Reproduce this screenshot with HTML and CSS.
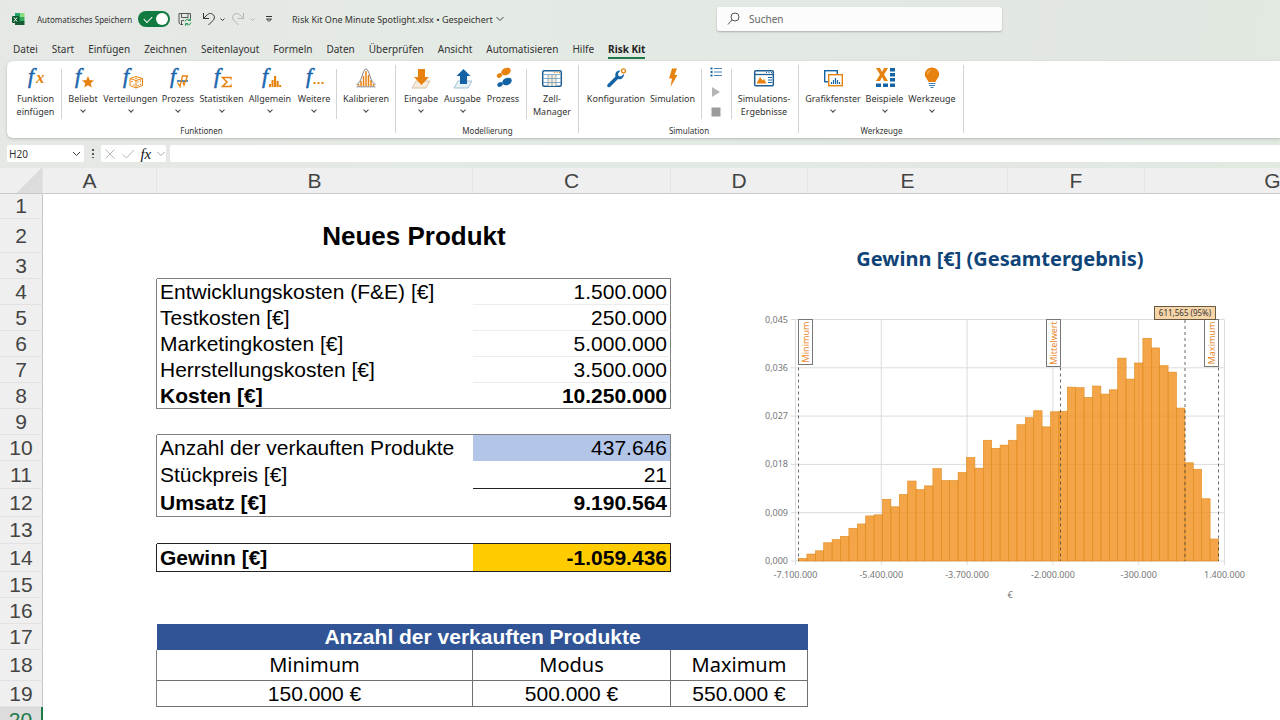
FILE: index.html
```html
<!DOCTYPE html>
<html lang="de">
<head>
    <meta charset="UTF-8">
    <meta name="viewport" content="width=device-width, initial-scale=1.0">
    <title>Risk Kit One Minute Spotlight.xlsx</title>
    <link rel="stylesheet" href="styles.css">
</head>
<body>
    <!-- Title bar -->
    <header class="titlebar">
        <div class="quick-access">
            <svg class="app-icon" width="14" height="14" viewBox="0 0 14 14">
                <path d="M3 1h5v4H3z" fill="#21a366"/><path d="M8 1h4.500v4H8z" fill="#8fdc7c"/>
                <path d="M3 5h5v4H3z" fill="#107c41"/><path d="M8 5h4.500v4H8z" fill="#33a85c"/>
                <path d="M3 9h9.500v4H3z" fill="#185c37"/>
                <rect x="0" y="4" width="7" height="7" rx="1" fill="#0b5a2e"/>
                <path d="M2 5.500l3 4M5 5.500l-3 4" stroke="#fff" stroke-width="1"/>
            </svg>
            <label class="autosave" for="autosave">Automatisches Speichern</label>
            <input class="switch" type="checkbox" id="autosave" checked>
            <button class="icon-button" aria-label="Speichern">
                <svg width="14" height="14" viewBox="0 0 14 14" fill="none" stroke="#555">
                    <path d="M5 12.500H2.500L1 11V1.500h11.500V6M3.500 1.500V5.500h6.500V1.500M3.500 12.500V8.500H6"/>
                    <path d="M7 9.500a3 3 0 0 1 5-1.500M12.500 6v2.500H10M13 10.500a3 3 0 0 1-5 1.500M7.500 13.800V11.500H10" stroke="#2f9a57"/>
                </svg>
            </button>
            <button class="icon-button undo" aria-label="Rückgängig">
                <svg width="24" height="14" viewBox="0 0 24 14" fill="none" stroke="#333">
                    <path d="M1.500 1v5.500H7M1.500 6.500L5 3C7 1 10 1 11.500 3s1 4-.5 5.500L6.500 13"/>
                    <path d="M18.500 6.500l2 2 2-2"/>
                </svg>
            </button>
            <button class="icon-button redo" aria-label="Wiederholen">
                <svg width="24" height="14" viewBox="0 0 24 14" fill="none" stroke="#b4b8b4">
                    <path d="M11.500 1v5.500H6M11.500 6.500L8 3C6 1 3 1 1.500 3s-1 4 .5 5.500L6.500 13"/>
                    <path d="M18.500 6.500l2 2 2-2"/>
                </svg>
            </button>
            <button class="icon-button" aria-label="Symbolleiste anpassen">
                <svg width="8" height="8" viewBox="0 0 8 8" fill="none" stroke="#333"><path d="M1 1.500h6M1.500 4h5L4 6.500z"/></svg>
            </button>
            <button class="file-name">Risk Kit One Minute Spotlight.xlsx • Gespeichert
                <svg width="8" height="6" viewBox="0 0 8 6" fill="none" stroke="#444"><path d="M.5 1L4 4.500 7.500 1"/></svg>
            </button>
        </div>
        <div class="search">
            <svg width="14" height="14" viewBox="0 0 14 14" fill="none" stroke="#555"><circle cx="8" cy="5" r="4"/><path d="M5 8L1 12.500"/></svg>
            <input type="text" placeholder="Suchen" aria-label="Suchen">
        </div>
    </header>

    <!-- Tabs -->
    <nav class="tabs">
        <a href="#">Datei</a>
        <a href="#">Start</a>
        <a href="#">Einfügen</a>
        <a href="#">Zeichnen</a>
        <a href="#">Seitenlayout</a>
        <a href="#">Formeln</a>
        <a href="#">Daten</a>
        <a href="#">Überprüfen</a>
        <a href="#">Ansicht</a>
        <a href="#">Automatisieren</a>
        <a href="#">Hilfe</a>
        <a href="#" class="active">Risk Kit</a>
    </nav>

    <!-- Ribbon -->
    <div class="ribbon">
        <section class="group functions">
            <div class="tools">
                <button class="tool">
                    <svg width="24" height="22" viewBox="0 0 24 22"><text class="f" x="4" y="16">f</text><text class="x" x="12" y="16">x</text></svg>
                    <span>Funktion<br>einfügen</span>
                </button>
                <i class="sep"></i>
                <button class="tool">
                    <svg width="24" height="22" viewBox="0 0 24 22"><text class="f" x="4" y="16">f</text><path d="M17 9l1.700 4 4.300.4-3.300 2.800 1 4.300L17 18.200l-3.700 2.300 1-4.300L11 13.400l4.300-.4z" fill="#e8820e"/></svg>
                    <span>Beliebt</span><i class="down"></i>
                </button>
                <button class="tool">
                    <svg width="24" height="22" viewBox="0 0 24 22"><text class="f" x="4" y="16">f</text>
                        <path d="M17 9.500l6.500 2v7L17 21l-6-2.500v-7zM11 11.500l6 2 6.500-2M17 13.500V21" fill="#fff" stroke="#e8820e"/>
                        <g fill="#e8820e"><circle cx="13" cy="14.500" r=".8"/><circle cx="15" cy="18" r=".8"/><circle cx="19" cy="15" r=".7"/><circle cx="21.500" cy="14" r=".7"/><circle cx="19" cy="18.500" r=".7"/><circle cx="21.500" cy="17.500" r=".7"/><circle cx="17" cy="11.500" r=".8"/></g></svg>
                    <span>Verteilungen</span><i class="down"></i>
                </button>
                <button class="tool">
                    <svg width="24" height="22" viewBox="0 0 24 22"><text class="f" x="4" y="16">f</text><path d="M11 14h11" stroke="#1c66ad" stroke-width="1.500"/><path d="M11.500 15.500l2.500 4 2.500-10.500h5l-3.500 9-1-3" fill="none" stroke="#e8820e" stroke-width="1.300"/></svg>
                    <span>Prozess</span><i class="down"></i>
                </button>
                <button class="tool">
                    <svg width="24" height="22" viewBox="0 0 24 22"><text class="f" x="4" y="16">f</text><path d="M21 12.500v-2h-8.500l4.500 4.500-4.500 4.500H21v-2" fill="none" stroke="#e8820e" stroke-width="1.500"/></svg>
                    <span>Statistiken</span><i class="down"></i>
                </button>
                <button class="tool">
                    <svg width="24" height="22" viewBox="0 0 24 22"><text class="f" x="4" y="16">f</text><path d="M11 17h2v3h-2zM13.500 13h2v7h-2zM16 9h2.200v11H16zM18.700 14h2v6h-2zM21.200 18h2v2h-2z" fill="#e8820e"/></svg>
                    <span>Allgemein</span><i class="down"></i>
                </button>
                <button class="tool">
                    <svg width="24" height="22" viewBox="0 0 24 22"><text class="f" x="4" y="16">f</text><path d="M11.500 15h2v2h-2zM15.500 15h2v2h-2zM19.500 15h2v2h-2z" fill="#e8820e"/></svg>
                    <span>Weitere</span><i class="down"></i>
                </button>
                <i class="sep"></i>
                <button class="tool">
                    <svg width="24" height="22" viewBox="0 0 24 22" fill="none"><path d="M4.500 19v-2M7 19v-5M9.500 19V9M12 19V4M14.500 19V8M17 19v-6M19.500 19v-2" stroke="#e8820e" stroke-width="1.500"/><path d="M2.500 17.500C8 16 8.500 2 12 2s4 14 9.500 15.500M2.500 19.800h19" stroke="#777" stroke-width=".9"/></svg>
                    <span>Kalibrieren</span><i class="down"></i>
                </button>
            </div>
            <h2>Funktionen</h2>
        </section>

        <section class="group modelling">
            <div class="tools">
                <button class="tool">
                    <svg width="24" height="22" viewBox="0 0 24 22"><path d="M7 14h14l-4 7H3z" fill="#f8eddd" stroke="#c9b79c" stroke-width=".8"/><path d="M9 2h7v8h4l-7.500 8L5 10h4z" fill="#e8820e"/></svg>
                    <span>Eingabe</span><i class="down"></i>
                </button>
                <button class="tool">
                    <svg width="24" height="22" viewBox="0 0 24 22"><path d="M7 14h14l-4 7H3z" fill="#e6f1f6" stroke="#8fb6c9" stroke-width=".8"/><path d="M12.500 2l7 7H16v8H9V9H5.500z" fill="#1464a5"/></svg>
                    <span>Ausgabe</span><i class="down"></i>
                </button>
                <button class="tool">
                    <svg width="24" height="22" viewBox="0 0 24 22"><g fill="#e8820e"><ellipse cx="15" cy="4.500" rx="5" ry="3.500" transform="rotate(-25 15 4.500)"/><ellipse cx="8.500" cy="8.500" rx="2.800" ry="2.200" transform="rotate(-25 8.500 8.500)"/></g><g fill="#1464a5"><ellipse cx="16" cy="14.500" rx="5" ry="3.500" transform="rotate(-25 16 14.500)"/><ellipse cx="9" cy="17.500" rx="2.800" ry="2.200" transform="rotate(-25 9 17.500)"/></g></svg>
                    <span>Prozess</span>
                </button>
                <i class="sep"></i>
                <button class="tool">
                    <svg width="24" height="22" viewBox="0 0 24 22" fill="none"><rect x="2.700" y="3.700" width="18.600" height="15.600" rx="1.500" fill="#fff" stroke="#1f5f93" stroke-width="1.500"/><path d="M8 8h8v11H8z" fill="#f8ecd5"/><path d="M3 7.500h18M3 11.500h18M3 15.500h18M8 8v11M12 8v11M16 8v11" stroke="#6d9bbd" stroke-width=".8"/><path d="M14 5.500h1M16.500 5.500h1M19 5.500h1" stroke="#e8820e"/></svg>
                    <span>Zell-<br>Manager</span>
                </button>
            </div>
            <h2>Modellierung</h2>
        </section>

        <section class="group simulation">
            <div class="tools">
                <button class="tool">
                    <svg width="24" height="22" viewBox="0 0 24 22"><path d="M3.500 17.500l8-8C10.500 6 13 3 16.500 3.500L14 6.500l.5 2.500 2.500.5 3-2.500c0 4-3 6-6 5l-8 8c-2 1-3.500-.5-2.500-2.500z" fill="#1464a5"/><circle cx="19.500" cy="3.800" r="2" fill="none" stroke="#e8820e" stroke-width="1.300"/></svg>
                    <span>Konfiguration</span>
                </button>
                <button class="tool">
                    <svg width="24" height="22" viewBox="0 0 24 22"><path d="M11 1.500h5L13.500 8H16.500L9.500 20l1.500-8.500H8z" fill="#e8820e"/></svg>
                    <span>Simulation</span>
                </button>
                <i class="sep"></i>
                <div class="mini-tools">
                    <button aria-label="Liste"><svg width="12" height="10" viewBox="0 0 12 10"><path d="M4 1.500h8M4 5h8M4 8.500h8" stroke="#4a86b7"/><path d="M.5 .5h2v2h-2zM.5 4h2v2h-2zM.5 7.500h2v2h-2z" fill="#1464a5"/></svg></button>
                    <button aria-label="Start"><svg width="12" height="10" viewBox="0 0 12 10"><path d="M2 0l8 5-8 5z" fill="#b5b5b5"/></svg></button>
                    <button aria-label="Stopp"><svg width="12" height="10" viewBox="0 0 12 10"><path d="M1.500 .5h9v9h-9z" fill="#9b9b9b"/></svg></button>
                </div>
                <i class="sep"></i>
                <button class="tool">
                    <svg width="24" height="22" viewBox="0 0 24 22" fill="none"><rect x="2.700" y="3.700" width="18.600" height="15" rx="1" stroke="#1f5f93" stroke-width="1.500"/><path d="M3 7.500h18" stroke="#1f5f93" stroke-width="1.300"/><path d="M14 5.500h1M16.500 5.500h1M19 5.500h1" stroke="#1f5f93"/><path d="M4.500 16.500L8 10l2.500 3.500L12 12l2.500 4.500z" fill="#e8820e"/><path d="M16 10.500h4M16 13h4M16 15.500h4" stroke="#1464a5"/></svg>
                    <span>Simulations-<br>Ergebnisse</span>
                </button>
            </div>
            <h2>Simulation</h2>
        </section>

        <section class="group utilities">
            <div class="tools">
                <button class="tool">
                    <svg width="24" height="22" viewBox="0 0 24 22"><rect x="3.700" y="3.700" width="12.600" height="11" fill="#fff" stroke="#1464a5" stroke-width="1.400"/><rect x="7.700" y="7.700" width="13.600" height="11" fill="#fff" stroke="#e8820e" stroke-width="1.400"/><path d="M10.500 17v-2M12.500 17v-4M14.500 17v-6M16.500 17v-4M18.500 17v-2" stroke="#1464a5" stroke-width="1.200"/></svg>
                    <span>Grafikfenster</span><i class="down"></i>
                </button>
                <button class="tool">
                    <svg width="24" height="22" viewBox="0 0 24 22"><path d="M3 1h4l2 4 2-4h4l-4 6.500 4 6.500h-4l-2-4-2 4H3l4-6.500z" fill="#e8820e"/><path d="M17 1h5v3.500h-5zM17 6h5v3.500h-5zM17 11h5v3.500h-5zM17 16.500h5V20h-5zM10 16.500h5V20h-5zM3 16.500h5V20H3z" fill="#1464a5"/></svg>
                    <span>Beispiele</span><i class="down"></i>
                </button>
                <button class="tool">
                    <svg width="24" height="22" viewBox="0 0 24 22"><path d="M12 .5a7 7 0 0 1 7.200 7c0 3-2.700 4.500-3.700 7.500h-7c-1-3-3.700-4.500-3.700-7.500A7 7 0 0 1 12 .5z" fill="#e8820e"/><path d="M7.500 7A4.500 4.500 0 0 1 10.500 3.200" fill="none" stroke="#f9c37e"/><path d="M8.500 16.500h7M9 18.500h6M10.500 20.500h3" stroke="#3c7fb5" stroke-width="1.200"/></svg>
                    <span>Werkzeuge</span><i class="down"></i>
                </button>
            </div>
            <h2>Werkzeuge</h2>
        </section>
    </div>

    <!-- Formula bar -->
    <div class="formula-bar">
        <div class="name-box">
            <input type="text" value="H20" aria-label="Namenfeld">
            <svg width="9" height="6" viewBox="0 0 9 6" fill="none" stroke="#444"><path d="M1 1l3.500 3.500L8 1"/></svg>
        </div>
        <span class="grip"></span>
        <div class="formula-buttons">
            <button aria-label="Abbrechen"><svg width="12" height="12" viewBox="0 0 12 12" fill="none" stroke="#b8b8b8"><path d="M1.500 1.500l9 9M10.500 1.500l-9 9"/></svg></button>
            <button aria-label="Eingeben"><svg width="13" height="12" viewBox="0 0 13 12" fill="none" stroke="#b8b8b8"><path d="M1 6.500l3.500 3.500L12 2"/></svg></button>
            <button class="fx">fx</button>
            <svg width="8" height="6" viewBox="0 0 8 6" fill="none" stroke="#aaa"><path d="M.5 1L4 4.500 7.500 1"/></svg>
        </div>
        <input class="formula" type="text" aria-label="Bearbeitungsleiste">
    </div>

    <!-- Worksheet -->
    <main class="sheet">
        <table>
            <colgroup>
                <col class="col-head"><col class="col-a"><col class="col-b"><col class="col-c">
                <col class="col-d"><col class="col-e"><col class="col-f"><col class="col-g">
            </colgroup>
            <thead>
                <tr><th class="corner"></th><th class="a">A</th><th>B</th><th>C</th><th>D</th><th>E</th><th>F</th><th>G</th></tr>
            </thead>
            <tbody>
                <tr class="first"><th>1</th><td></td><td></td><td></td><td></td></tr>
                <tr class="tall"><th>2</th><td></td><td class="title" colspan="2">Neues Produkt</td><td></td></tr>
                <tr><th>3</th><td></td><td class="line"></td><td class="line"></td><td></td></tr>
                <tr><th>4</th><td class="edge"></td><td>Entwicklungskosten (F&amp;E) [€]</td><td class="num faint">1.500.000</td><td></td></tr>
                <tr><th>5</th><td class="edge"></td><td>Testkosten [€]</td><td class="num faint">250.000</td><td></td></tr>
                <tr><th>6</th><td class="edge"></td><td>Marketingkosten [€]</td><td class="num faint">5.000.000</td><td></td></tr>
                <tr><th>7</th><td class="edge"></td><td>Herrstellungskosten [€]</td><td class="num faint">3.500.000</td><td></td></tr>
                <tr class="sum"><th>8</th><td class="edge"></td><td class="line">Kosten [€]</td><td class="num line">10.250.000</td><td></td></tr>
                <tr><th>9</th><td></td><td class="line"></td><td class="line"></td><td></td></tr>
                <tr><th>10</th><td class="edge"></td><td>Anzahl der verkauften Produkte</td><td class="num input">437.646</td><td></td></tr>
                <tr class="mid"><th>11</th><td class="edge"></td><td>Stückpreis [€]</td><td class="num strong">21</td><td></td></tr>
                <tr class="mid sum"><th>12</th><td class="edge"></td><td class="line">Umsatz [€]</td><td class="num line">9.190.564</td><td></td></tr>
                <tr class="gap"><th>13</th><td></td><td class="strong"></td><td class="strong"></td><td></td></tr>
                <tr class="mid sum"><th>14</th><td class="edge strong-edge"></td><td class="strong">Gewinn [€]</td><td class="num result strong">-1.059.436</td><td></td></tr>
                <tr><th>15</th><td></td><td></td><td></td><td></td></tr>
                <tr><th>16</th><td></td><td></td><td></td><td></td></tr>
                <tr><th>17</th><td></td><td class="banner" colspan="3">Anzahl der verkauften Produkte</td></tr>
                <tr class="param-names"><th>18</th><td class="edge"></td><td class="box">Minimum</td><td class="box">Modus</td><td class="box">Maximum</td></tr>
                <tr><th>19</th><td class="edge"></td><td class="box">150.000 €</td><td class="box">500.000 €</td><td class="box">550.000 €</td></tr>
                <tr class="current"><th>20</th><td></td><td></td><td></td><td></td></tr>
            </tbody>
        </table>

        <!-- Chart object floating over the cells -->
        <figure class="chart">
            <figcaption>Gewinn [€] (Gesamtergebnis)</figcaption>
            <svg id="histogram" width="500" height="310" viewBox="0 0 500 310"></svg>
        </figure>
    </main>

    <script src="chart.js"></script>
</body>
</html>
```
FILE: styles.css
```css
* {
    margin: 0;
    padding: 0;
    box-sizing: border-box;
}

body {
    display: flex;
    flex-direction: column;
    height: 100vh;
    overflow: hidden;
    background: linear-gradient(100deg, #e6e8e6, #e3eae3 40%, #e2e7e3 75%, #e1eadf);
    font-family: "Noto Sans", "Open Sans", sans-serif;
    font-size: 9px;
    color: #333;
}

button,
input {
    border: none;
    background: none;
    font: inherit;
    color: inherit;
    outline: none;
}

svg {
    display: block;
    flex: none;
    overflow: visible;
}

/* Title bar */
.titlebar {
    display: flex;
    height: 38px;
    padding-left: 12px;
    align-items: center;
}

.quick-access {
    display: flex;
    align-items: center;
    flex: 0 0 705px;
    font-size: 9px;
}

.autosave {
    width: 101px;
    margin-left: 11px;
    font-size: 8px;
    white-space: nowrap;
}

.switch {
    appearance: none;
    position: relative;
    width: 32px;
    height: 16px;
    margin-right: 8px;
    border-radius: 8px;
    background: #117a41;
}

.switch::after {
    content: "";
    position: absolute;
    right: 2px;
    top: 2px;
    width: 12px;
    height: 12px;
    border-radius: 50%;
    background: #fff;
}

.switch::before {
    content: "";
    position: absolute;
    left: 6px;
    top: 5px;
    width: 7px;
    height: 4px;
    border-left: 1px solid #fff;
    border-bottom: 1px solid #fff;
    transform: rotate(-45deg);
}

.undo {
    margin-left: 10px;
}

.redo {
    margin: 0 9px 0 6px;
}

.file-name {
    display: flex;
    align-items: center;
    gap: 3px;
    margin-left: 19px;
    white-space: nowrap;
}

.search {
    display: flex;
    align-items: center;
    gap: 8px;
    flex: 0 1 285px;
    height: 24px;
    padding: 0 10px;
    border-radius: 2px;
    background: #fbfcfb;
    box-shadow: 0 1px 2px #a9aeaa;
}

.search input {
    flex: 1;
    min-width: 0;
    font-size: 10px;
}

.search input::placeholder {
    color: #666;
}

/* Tabs */
.tabs {
    display: flex;
    gap: 14px;
    height: 23px;
    padding: 4px 13px 0;
    font-size: 10px;
    line-height: 15px;
}

.tabs a {
    height: 17px;
    color: #333;
    text-decoration: none;
    white-space: nowrap;
}

.tabs .active {
    border-bottom: 2px solid #1d7a47;
    font-weight: bold;
    color: #222;
}

/* Ribbon */
.ribbon {
    display: flex;
    height: 77px;
    margin-left: 7px;
    border-radius: 6px 0 0 6px;
    background: #fff;
    box-shadow: 0 1px 3px #b4bab5;
}

.group {
    position: relative;
    display: flex;
    flex-direction: column;
    justify-content: space-between;
}

.group::after {
    content: "";
    position: absolute;
    top: 4px;
    right: 0;
    bottom: 5px;
    border-right: 1px solid #d4d4d4;
}

.group h2 {
    font-size: 8px;
    font-weight: normal;
    line-height: 15px;
    text-align: center;
}

.tools {
    display: grid;
    padding-top: 6px;
}

.functions .tools {
    grid-template-columns: 51px 1px 42px 53px 42px 45px 52px 36px 5px 58px;
    padding-left: 3px;
    padding-right: 1px;
}

.modelling .tools {
    grid-template-columns: 42px 41px 40px 4px 50px;
    padding-left: 4px;
    padding-right: 2px;
}

.simulation .tools {
    grid-template-columns: 64px 49px 5px 28px 2px 64px;
    padding-left: 5px;
    padding-right: 3px;
}

.utilities .tools {
    grid-template-columns: 60px 43px 52px;
    padding-left: 4px;
    padding-right: 6px;
}

.tool {
    display: flex;
    flex-direction: column;
    align-items: center;
    line-height: 13px;
    white-space: nowrap;
}

.tool span {
    margin-top: 3px;
}

.tool .f {
    font: italic 22px "Liberation Serif", serif;
    fill: #1c66ad;
    stroke: #1c66ad;
    stroke-width: 0.5;
}

.tool .x {
    font: italic bold 17px "Liberation Serif", serif;
    fill: #e8820e;
}

.down {
    width: 4px;
    height: 4px;
    margin-top: 3px;
    border-right: 1px solid #444;
    border-bottom: 1px solid #444;
    transform: rotate(45deg);
}

.sep {
    height: 50px;
    margin-top: 2px;
    border-right: 1px solid #d4d4d4;
}

.mini-tools {
    display: flex;
    flex-direction: column;
    align-items: center;
    gap: 10px;
}

/* Formula bar */
.formula-bar {
    display: flex;
    height: 17px;
    margin: 7px 0 6px 7px;
}

.name-box,
.formula-buttons {
    display: flex;
    align-items: center;
    border-radius: 2px;
    background: #fff;
}

.name-box {
    width: 77px;
    padding: 0 3px 0 2px;
}

.name-box input {
    flex: 1;
    min-width: 0;
    font-size: 10px;
}

.grip {
    width: 2px;
    height: 9px;
    margin: 4px 7px 0 8px;
    background: repeating-linear-gradient(#555 0 2px, transparent 2px 4px);
}

.formula-buttons {
    justify-content: space-between;
    width: 65px;
    padding: 0 1px 0 3px;
}

.fx {
    font: italic 15px/16px "Liberation Serif", serif;
    color: #111;
}

.formula {
    flex: 1;
    margin-left: 4px;
    border-radius: 2px 0 0 2px;
    background: #fff;
}

/* Worksheet */
.sheet {
    position: relative;
    flex: 1;
    overflow: hidden;
    background: #fff;
    font-family: "Liberation Sans", Arial, sans-serif;
    font-size: 21px;
    line-height: 24px;
    color: #000;
}

table {
    width: 1401px;
    table-layout: fixed;
    border-collapse: separate;
    border-spacing: 0;
}

.col-head { width: 43px; }
.col-a { width: 114px; }
.col-b { width: 316px; }
.col-c { width: 198px; }
.col-d { width: 137px; }
.col-e { width: 200px; }
.col-f { width: 137px; }
.col-g { width: 256px; }

tr {
    height: 26px;
}

.first { height: 25px; }
.tall { height: 34px; }
.gap { height: 27px; }
.mid { height: 28px; }
.param-names { height: 31px; }

th {
    background: #efefef;
    color: #444;
    font-weight: normal;
}

thead th {
    border-right: 1px solid #e4e4e4;
    border-bottom: 1px solid #c9c9c9;
}

thead .a {
    padding-right: 20px;
}

.corner {
    background: linear-gradient(135deg, #efefef 62%, #dcdcdc 62%);
}

tbody th {
    border-right: 1px solid #c6c6c6;
    border-bottom: 1px solid #e2e2e2;
}

td {
    padding: 0 3px;
    white-space: nowrap;
}

.title {
    font-size: 26px;
    font-weight: bold;
    text-align: center;
}

.num {
    border-right: 1px solid #808080;
    text-align: right;
}

.sum td {
    font-weight: bold;
}

.edge { border-right: 1px solid #808080; }
.line { border-bottom: 1px solid #808080; }
.faint { border-bottom: 1px solid #ececec; }
.strong { border-bottom: 1px solid #222; }
.strong-edge { border-right-color: #222; }

.input {
    background: #b4c6e7;
}

.result {
    border-right-color: #222;
    background: #ffcc00;
}

.banner {
    background: #305496;
    color: #fff;
    font-weight: bold;
    text-align: center;
}

.box {
    border-right: 1px solid #707070;
    border-bottom: 1px solid #707070;
    text-align: center;
}

.param-names .box {
    font-family: "Noto Sans", sans-serif;
    font-size: 20px;
}

.current th {
    border-right: 2px solid #1d7a47;
    background: #dcdcdc;
    color: #1d7a47;
}

/* Chart */
.chart {
    position: absolute;
    top: 78px;
    left: 750px;
    width: 500px;
    font-family: "Noto Sans", "Open Sans", sans-serif;
}

.chart figcaption {
    height: 54px;
    line-height: 26px;
    font-size: 20px;
    font-weight: bold;
    text-align: center;
    color: #0f4478;
}

.chart text {
    font-size: 9px;
    fill: #777;
}

.chart .tick {
    stroke: #dcdcdc;
}

.chart .bar {
    fill: #f08c14;
    fill-opacity: 0.78;
    stroke: #e08a1e;
    stroke-width: 0.6;
}

.chart .marker {
    stroke: #444;
    stroke-opacity: 0.8;
    stroke-dasharray: 3 3;
}

.chart .flag {
    fill: #fff;
    stroke: #777;
}

.chart .flag-text {
    fill: #e8872a;
}

.chart .value-flag {
    fill: #f6d5a8;
    stroke: #6b5a42;
}

.chart .value-text {
    font-size: 8px;
    fill: #333;
}
```
FILE: chart.js
```javascript
const svg = document.getElementById('histogram');

// Plot area inside the svg
const plot = { left: 45.5, top: 19.5, width: 429, height: 241.5 };
const bottom = plot.top + plot.height;

const density = [
    5, 13, 19, 34, 40, 46, 61, 69, 84, 86,
    115, 101, 124, 149, 133, 140, 172, 150, 150, 165,
    193, 173, 225, 210, 216, 225, 254, 267, 280, 250,
    278, 279, 324, 323, 305, 326, 311, 319, 378, 339,
    369, 415, 397, 364, 352, 285, 183, 171, 116, 41
];

const yLabels = ['0,000', '0,009', '0,018', '0,027', '0,036', '0,045'];
const xLabels = ['-7.100.000', '-5.400.000', '-3.700.000', '-2.000.000', '-300.000', '1.400.000'];

const flags = [
    { text: 'Minimum', line: 48.5, box: 48.5, height: 45 },
    { text: 'Mittelwert', line: 310.5, box: 296.5, height: 47 },
    { text: 'Maximum', line: 468.5, box: 454.5, height: 47 }
];

let out = '';

// Grid and axis labels
yLabels.forEach((label, i) => {
    const y = bottom - plot.height * i / 5;
    out += `<line class="tick" x1="41" x2="${plot.left + plot.width}" y1="${y}" y2="${y}"/>`;
    out += `<text x="38" y="${y + 3}" text-anchor="end">${label}</text>`;
});
xLabels.forEach((label, i) => {
    const x = plot.left + plot.width * i / 5;
    out += `<line class="tick" x1="${x}" x2="${x}" y1="${plot.top}" y2="${bottom + 4}"/>`;
    out += `<text x="${x}" y="278" text-anchor="middle">${label}</text>`;
});

// Bars
density.forEach((value, i) => {
    const height = value / 450 * plot.height;
    out += `<rect class="bar" x="${48.5 + i * 8.4}" y="${bottom - height}" width="8.4" height="${height}"/>`;
});

// Markers
flags.forEach(flag => {
    out += `<line class="marker" x1="${flag.line}" x2="${flag.line}" y1="${plot.top}" y2="${bottom}"/>`;
    out += `<rect class="flag" x="${flag.box}" y="${plot.top}" width="14" height="${flag.height}"/>`;
    out += `<text class="flag-text" text-anchor="middle" transform="translate(${flag.box + 10} ${plot.top + flag.height / 2}) rotate(-90)">${flag.text}</text>`;
});
out += `<line class="marker" x1="435" x2="435" y1="20" y2="${bottom}"/>`;
out += '<rect class="value-flag" x="404.5" y="6.5" width="61" height="13"/>';
out += '<text class="value-text" x="435" y="16" text-anchor="middle">611,565 (95%)</text>';
out += '<text x="260" y="298" text-anchor="middle">€</text>';

svg.innerHTML = out;
```
